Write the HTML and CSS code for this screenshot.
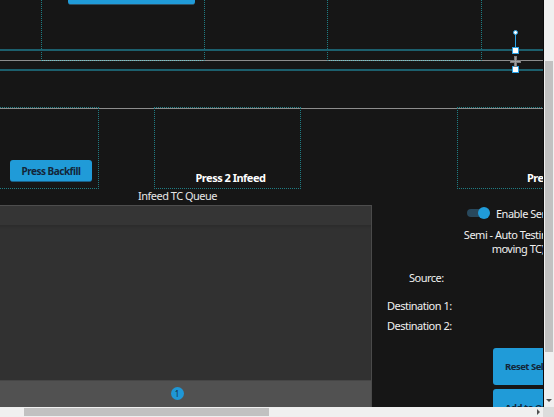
FILE: index.html
```html
<!DOCTYPE html>
<html>
<head>
<meta charset="utf-8">
<link rel="stylesheet" href="styles.css">
</head>
<body>
<div class="window">
  <div class="viewport">
    <div class="row-top">
      <div class="box box-1"><button class="btn btn-top"></button></div>
      <div class="box box-2"></div>
    </div>
    <div class="row-gap"></div>
    <div class="row-mid">
      <div class="box box-a"><button class="btn btn-backfill">Press Backfill</button></div>
      <div class="box box-b"><span class="box-title">Press 2 Infeed</span></div>
      <div class="box box-c"><span class="box-title">Press 3 Infeed</span></div>
    </div>
    <div class="lower">
      <div class="queue">
        <div class="queue-label">Infeed TC Queue</div>
        <div class="grid">
          <div class="grid-head"></div>
          <div class="grid-body"></div>
          <div class="grid-foot"><span class="page">1</span></div>
        </div>
      </div>
      <div class="side">
        <div class="toggle-row">
          <span class="toggle"><span class="knob"></span></span>
          <span class="toggle-text">Enable Semi-Auto Testing</span>
        </div>
        <div class="semi-note">Semi - Auto Testing (for<br>moving TC)</div>
        <div class="field field-src">Source:</div>
        <div class="field field-d1">Destination 1:</div>
        <div class="field field-d2">Destination 2:</div>
        <button class="btn btn-side btn-reset">Reset Selection</button>
        <button class="btn btn-side btn-add">Add to Queue</button>
      </div>
    </div>

    <div class="guide guide-1"></div>
    <div class="guide guide-2"></div>
    <div class="handle-line"></div>
    <div class="handle-dot"></div>
    <div class="handle-sq handle-sq-1"></div>
    <div class="handle-sq handle-sq-2"></div>
    <svg class="move-icon" width="11" height="11" viewBox="0 0 11 11"><path d="M4 0h3v4h4v3H7v4H4V7H0V4h4z" fill="#7e7e7e"/><path d="M5 1h1v4h4v1H6v4H5V6H1V5h4z" fill="#a0a0a0"/></svg>
  </div>
  <div class="vbar">
    <div class="vthumb"></div>
    <div class="vfill"></div>
    <span class="arrow-down"></span>
  </div>
  <div class="hbar">
    <div class="hthumb"></div>
    <div class="hfill"></div>
    <span class="arrow-right"></span>
  </div>
  <div class="corner"></div>
</div>
</body>
</html>
```
FILE: styles.css
```css
* { box-sizing: border-box; }
html, body { margin: 0; padding: 0; }
body {
  width: 554px;
  height: 417px;
  overflow: hidden;
  background: #161616;
  font-family: "Noto Sans", "Open Sans", sans-serif;
  color: #ececec;
  letter-spacing: -0.5px;
}
.window {
  display: grid;
  grid-template-columns: 543px 11px;
  grid-template-rows: 407px 10px;
  width: 554px;
  height: 417px;
}
.viewport {
  position: relative;
  overflow: hidden;
  background: #161616;
  display: flex;
  flex-direction: column;
}
.box {
  border: 1px dotted #1f7c83;
  flex: none;
}
.btn {
  display: block;
  border: none;
  background: #209bd8;
  color: #13263a;
  font-family: "Noto Sans", sans-serif;
  font-weight: 700;
  letter-spacing: -0.5px;
  padding: 0;
  border-radius: 3px;
}

/* top row */
.row-top {
  height: 61px;
  flex: none;
  display: flex;
  background: linear-gradient(to top, #8d8d8d 1px, transparent 1px);
}
.box-1 {
  margin-left: 41px;
  width: 164px;
  height: 61px;
  border-top: none;
  border-bottom-color: #6fc6cc;
}
.box-2 {
  margin-left: 122px;
  width: 155px;
  height: 61px;
  border-top: none;
  border-bottom-color: #6fc6cc;
}
.btn-top {
  margin-top: -20px;
  margin-left: 26px;
  width: 127px;
  height: 25px;
  border-bottom: 1px solid #2e4f62;
}
.row-gap { height: 46px; flex: none; }

/* middle row */
.row-mid {
  height: 82px;
  flex: none;
  display: flex;
  background: linear-gradient(to bottom, transparent 1px, #8d8d8d 1px, #8d8d8d 2px, transparent 2px);
}
.box-a {
  margin-left: -48px;
  width: 147px;
  height: 82px;
  display: flex;
  align-items: flex-end;
  padding: 0 0 6px 57px;
}
.btn-backfill {
  width: 82px;
  height: 22px;
  font-size: 10px;
  border-bottom: 1px solid #1a5f86;
}
.box-b {
  margin-left: 55px;
  width: 147px;
  height: 82px;
  display: flex;
  align-items: flex-end;
  justify-content: center;
  padding: 0 0 3px 6px;
}
.box-c {
  margin-left: 156px;
  width: 147px;
  height: 82px;
  display: flex;
  align-items: flex-end;
  padding: 0 0 3px 69px;
}
.box-title {
  font-size: 11px;
  font-weight: 700;
  color: #ffffff;
  line-height: 14px;
  white-space: nowrap;
}

/* lower */
.lower {
  display: flex;
  flex: none;
}
.queue {
  margin-left: -17px;
  width: 389px;
  flex: none;
}
.queue-label {
  height: 16px;
  line-height: 13px;
  font-size: 11px;
  text-align: center;
  color: #e6e6e6;
}
.grid {
  border-top: 1px solid #4d4d4d;
  border-right: 1px solid #4a4a4a;
  background: #313131;
}
.grid-head {
  height: 19px;
  background: #353535;
}
.grid-body {
  height: 155px;
  background: #313131;
  box-shadow: inset 0 3px 3px -2px #2a2a2a;
}
.grid-foot {
  height: 40px;
  background: #515151;
  border-top: 1px solid #464646;
  padding-top: 6px;
  display: flex;
  justify-content: center;
}
.page {
  width: 13px;
  height: 13px;
  border-radius: 50%;
  background: #1f97d6;
  color: #102c44;
  font-size: 8px;
  line-height: 13px;
  text-align: center;
  letter-spacing: 0;
}

.side {
  flex: 1;
  display: flex;
  flex-direction: column;
  min-width: 0;
}
.toggle-row {
  margin-top: 16px;
  height: 16px;
  display: flex;
  align-items: center;
  padding-left: 95px;
  white-space: nowrap;
}
.toggle {
  position: relative;
  width: 20px;
  height: 8px;
  border-radius: 4px;
  background: #28485c;
  flex: none;
}
.knob {
  position: absolute;
  right: -3px;
  top: -2px;
  width: 12px;
  height: 12px;
  border-radius: 50%;
  background: #209bd8;
}
.toggle-text {
  margin-left: 9px;
  font-size: 11px;
  color: #f0f0f0;
}
.semi-note {
  margin-top: 7px;
  margin-left: 80px;
  width: 132px;
  text-align: center;
  font-size: 11px;
  line-height: 14px;
  color: #f0f0f0;
  white-space: nowrap;
}
.field {
  font-size: 11px;
  line-height: 14px;
  color: #f0f0f0;
  white-space: nowrap;
}
.field-src { margin-top: 15px; margin-left: 37px; }
.field-d1 { margin-top: 14px; margin-left: 15px; }
.field-d2 { margin-top: 6px; margin-left: 15px; }
.btn-side {
  margin-left: 121px;
  width: 110px;
  height: 37px;
  font-size: 9.5px;
  text-align: left;
  padding-left: 12px;
  white-space: nowrap;
  flex: none;
}
.btn-reset { margin-top: 15px; }
.btn-add { margin-top: 4px; }

/* overlays: selection guides and handles */
.guide {
  position: absolute;
  left: 0;
  right: 0;
  height: 2px;
  background: #1c5f6d;
}
.guide-1 { top: 49px; }
.guide-2 { top: 69px; }
.handle-line {
  position: absolute;
  left: 515px;
  top: 33px;
  width: 1px;
  height: 16px;
  background: #2aa3e6;
}
.handle-dot {
  position: absolute;
  left: 513px;
  top: 30px;
  width: 5px;
  height: 5px;
  border-radius: 50%;
  background: #ffffff;
  border: 1px solid #2aa3e6;
}
.handle-sq {
  position: absolute;
  left: 512px;
  width: 7px;
  height: 7px;
  background: #ffffff;
  border: 1px solid #2aa3e6;
}
.handle-sq-1 { top: 47px; }
.handle-sq-2 { top: 66px; }
.move-icon {
  position: absolute;
  left: 510px;
  top: 56px;
}

/* scrollbars */
.vbar {
  background: #f0f0f0;
  border-left: 1px solid #0c0c0c;
  display: flex;
  flex-direction: column;
  align-items: center;
  padding-top: 61px;
}
.vthumb {
  width: 8px;
  height: 291px;
  background: #c1c1c1;
  flex: none;
}
.vfill { flex: 1; }
.arrow-down {
  width: 0;
  height: 0;
  border-left: 3px solid transparent;
  border-right: 3px solid transparent;
  border-top: 3px solid #505050;
  margin-bottom: 5px;
}
.hbar {
  background: #f0f0f0;
  display: flex;
  align-items: center;
  padding-left: 24px;
  padding-right: 3px;
}
.hthumb {
  width: 245px;
  height: 8px;
  background: #c1c1c1;
  flex: none;
}
.hfill { flex: 1; }
.arrow-right {
  width: 0;
  height: 0;
  border-top: 3px solid transparent;
  border-bottom: 3px solid transparent;
  border-left: 3px solid #505050;
}
.corner { background: #dcdcdc; }
```
